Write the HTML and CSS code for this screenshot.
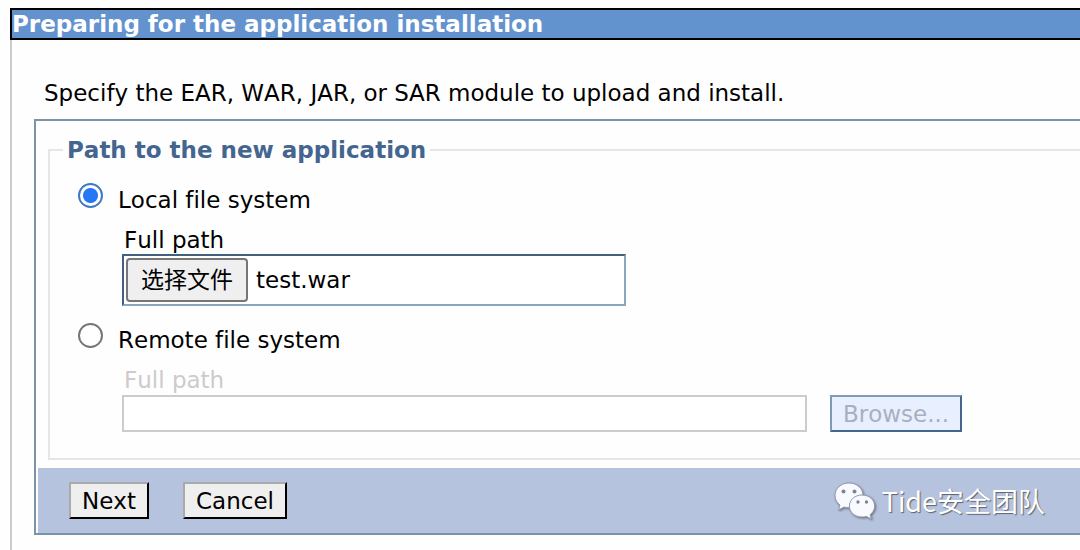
FILE: index.html
```html
<!DOCTYPE html>
<html lang="en">
<head>
<meta charset="utf-8">
<meta name="viewport" content="width=device-width, initial-scale=1">
<title>Preparing for the application installation</title>
<link rel="stylesheet" href="styles.css">
</head>
<body>
<main class="page">
  <h1 class="title">Preparing for the application installation</h1>
  <div class="content">
    <p class="intro">Specify the EAR, WAR, JAR, or SAR module to upload and install.</p>
    <form class="panel">
      <fieldset class="group">
        <legend class="legend">Path to the new application</legend>
        <div class="option">
          <input class="radio" type="radio" name="source" id="local" checked>
          <label for="local">Local file system</label>
        </div>
        <div class="field">
          <label class="caption" for="local-file">Full path</label>
          <div class="file-box">
            <input class="file-input" type="file" id="local-file">
            <label class="file-button" for="local-file" lang="zh-CN">选择文件</label>
            <span>test.war</span>
          </div>
        </div>
        <div class="option">
          <input class="radio" type="radio" name="source" id="remote">
          <label for="remote">Remote file system</label>
        </div>
        <div class="field">
          <label class="caption caption-disabled" for="remote-path">Full path</label>
          <div class="path-row">
            <input class="path-input" type="text" id="remote-path" disabled>
            <button class="browse" type="button" disabled>Browse...</button>
          </div>
        </div>
      </fieldset>
      <div class="actions">
        <button class="action" type="button">Next</button>
        <button class="action" type="button">Cancel</button>
        <div class="brand">
          <svg class="brand-icon" viewBox="0 0 42 38" aria-hidden="true">
            <path class="bubble" d="M15 1C7 1 1 6.500 1 13.500c0 4 2 7.300 5 9.500l-1.500 5 5.500-3c1.600.500 3.200.700 5 .700 8 0 14-5.200 14-12.200S23 1 15 1z"/>
            <path class="bubble" d="M28 13c-7.200 0-12.600 4.800-12.600 11S20.800 35 28 35c1.600 0 3-.200 4.300-.600l5.200 2.600-1.400-4.400c2.900-2 4.500-5 4.500-8.600 0-6.200-5.400-11-12.600-11z"/>
            <g class="eyes"><circle cx="9.500" cy="9.500" r="2"/><circle cx="20.500" cy="9.500" r="2"/><circle cx="24" cy="20" r="1.700"/><circle cx="32.500" cy="20" r="1.700"/></g>
          </svg>
          <span lang="zh-CN">Tide安全团队</span>
        </div>
      </div>
    </form>
  </div>
</main>
</body>
</html>
```
FILE: styles.css
```css
* { box-sizing: border-box; }

body {
  margin: 0;
  background: #fefefe;
  color: #000;
  font: 23px/28px Verdana, "DejaVu Sans", "Noto Sans CJK SC", sans-serif;
  font-kerning: none;
  font-variant-ligatures: none;
}

.page {
  display: flex;
  flex-direction: column;
  min-height: 100vh;
  padding: 8px 0 0 10px;
}

.title {
  margin: 0;
  border: 2px solid #000;
  border-right: 0;
  background: #6393ce;
  color: #fff;
  font-size: 23px;
  line-height: 28px;
}

.content {
  flex: 1;
  padding: 39px 0 16px 22px;
  border-left: 2px solid #ccc;
}

.intro { margin: 0 0 12px 10px; }

.panel {
  border: 2px solid #7a93a8;
  border-right: 0;
  padding: 15px 0 0 2px;
}

.group {
  min-width: 0;
  margin: 0 0 8px 10px;
  padding: 18px 0 26px 28px;
  border: 2px solid #e6e6e6;
  border-right: 0;
}

.legend {
  margin-left: -15px;
  padding: 0 4px;
  color: #43658f;
  font-weight: bold;
}

.option {
  display: flex;
  align-items: flex-end;
  gap: 15px;
  height: 32px;
}

.radio {
  align-self: flex-start;
  width: 25px;
  height: 25px;
  margin: 1px 0 0;
  appearance: none;
  border: 2px solid #767676;
  border-radius: 50%;
  background: #fff;
}

.radio:checked {
  border-color: #3f78c8;
  background: radial-gradient(circle, #2478f5 0 7px, #fff 8px);
}

.field {
  margin: 12px 0 16px 44px;
}

.field:last-child { margin-bottom: 0; }

.caption {
  display: block;
  padding-left: 2px;
}

.caption-disabled { color: #ccc; }

.file-box {
  position: relative;
  display: flex;
  align-items: center;
  gap: 8px;
  width: 504px;
  max-width: 100%;
  height: 52px;
  padding: 0 2px;
  border: 2px solid;
  border-color: #43607f #8ba6bf #8ba6bf #43607f;
  background: #fff;
}

.file-input {
  position: absolute;
  width: 1px;
  height: 1px;
  opacity: 0;
}

.file-button {
  padding: 6px 13px;
  border: 2px solid #767676;
  border-radius: 4px;
  background: #efefef;
}

.path-row {
  display: flex;
  gap: 23px;
  padding-top: 1px;
}

.path-input {
  width: 685px;
  min-width: 0;
  height: 37px;
  border: 2px solid #ccc;
  background: #fff;
  font: inherit;
}

.browse {
  height: 37px;
  padding: 0 11px;
  border: 2px solid;
  border-color: #7a9cb8 #43658f #43658f #7a9cb8;
  background: #e8f0ff;
  color: #a9afbe;
  font: inherit;
  font-kerning: none;
}

.actions {
  display: flex;
  align-items: center;
  gap: 34px;
  height: 65px;
  padding: 0 35px 0 31px;
  background: #b6c3de;
}

.action {
  height: 37px;
  padding: 0 11px;
  border: 2px solid;
  border-color: #aaa #000 #000 #aaa;
  background: #efefef;
  color: #000;
  font: inherit;
}

.brand {
  display: flex;
  align-items: center;
  gap: 6px;
  margin-left: auto;
  color: #fff;
  font: 27px/38px "Noto Sans CJK SC", sans-serif;
  text-shadow: 1px 1px 1px #59616f;
}

.brand-icon {
  width: 42px;
  height: 38px;
  filter: drop-shadow(1px 1px 1px #69717f);
}

.bubble {
  fill: #f8faff;
  stroke: #929aa9;
  stroke-width: 1;
}

.eyes { fill: #7c8593; }
```
